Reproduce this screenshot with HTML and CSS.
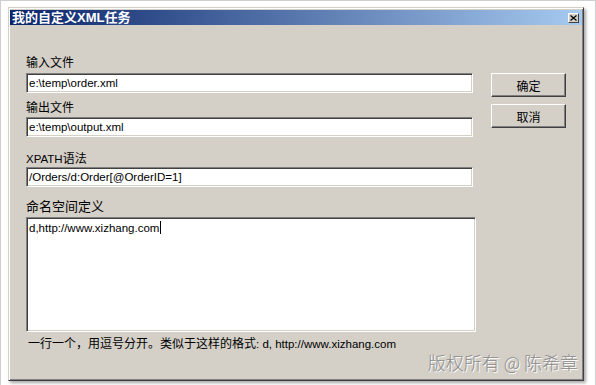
FILE: index.html
```html
<!DOCTYPE html>
<html lang="zh">
<head>
    <meta charset="UTF-8">
    <title>我的自定义XML任务</title>
    <link rel="stylesheet" href="styles.css">
</head>
<body>
    <div class="frame">
        <div class="dialog">
            <div class="titlebar">
                <span class="title">我的自定义XML任务</span>
                <span class="close">
                    <svg width="7" height="6" viewBox="0 0 7 6"><path d="M0.5 0.5 L6.5 5.5 M6.5 0.5 L0.5 5.5" stroke="#000" stroke-width="1.2" fill="none"/></svg>
                </span>
            </div>
            <div class="content">
                <div class="main">
                    <div class="fields">
                        <div class="label label-1">输入文件</div>
                        <div class="input">e:\temp\order.xml</div>
                        <div class="label label-2">输出文件</div>
                        <div class="input">e:\temp\output.xml</div>
                        <div class="label label-3"><span class="latin">XPATH</span>语法</div>
                        <div class="input">/Orders/d:Order[@OrderID=1]</div>
                        <div class="label label-4">命名空间定义</div>
                        <div class="input textarea">d,http://www.xizhang.com<span class="caret"></span></div>
                    </div>
                    <div class="buttons">
                        <button class="btn">确定</button>
                        <button class="btn">取消</button>
                    </div>
                </div>
                <div class="hint">一行一个，用逗号分开。类似于这样的格式<span class="latin">: d, http://www.xizhang.com</span></div>
                <div class="watermark">版权所有 @ 陈希章</div>
            </div>
        </div>
    </div>
</body>
</html>
```

FILE: styles.css
```css
body {
    margin: 0;
    background: #fff;
    font-family: "Liberation Sans", "Noto Sans CJK SC", sans-serif;
    font-size: 12px;
    color: #000;
}
.frame {
    height: 385px;
    box-sizing: border-box;
    border: 1px solid #cfcfcf;
    border-bottom: none;
    padding: 6px 0 0 7px;
}
.dialog {
    width: 576px;
    height: 374px;
    box-sizing: border-box;
    background: #d4d0c8;
    border: 1px solid;
    border-color: #d4d0c8 #404040 #404040 #d4d0c8;
    box-shadow: inset 1px 1px #fff, inset -1px -1px #808080, 2px 2px 3px rgba(0,0,0,0.35);
    padding: 2px 1px 0 1px;
}
.titlebar {
    height: 15px;
    background: linear-gradient(to right, #0a246a, #a6caf0);
    display: flex;
    align-items: center;
    justify-content: space-between;
    padding: 0 2px 0 2px;
}
.title {
    color: #fff;
    font-weight: bold;
    font-size: 13px;
    line-height: 15px;
}
.close {
    width: 11px;
    height: 10px;
    box-sizing: border-box;
    background: #d4d0c8;
    border: 1px solid;
    border-color: #fff #404040 #404040 #fff;
    display: flex;
    align-items: center;
    justify-content: center;
    margin-right: 1px;
}
.close svg {
    display: block;
}
.content {
    padding: 0 0 0 16px;
}
.main {
    display: flex;
    gap: 15px;
}
.fields {
    width: 450px;
}
.label {
    height: 14px;
    line-height: 14px;
    font-size: 12px;
}
.label-1 { margin-top: 31px; margin-bottom: 3px; }
.label-2 { margin-top: 8px; margin-bottom: 2px; }
.label-3 { margin-top: 15px; margin-bottom: 1px; }
.label-4 { margin-top: 12px; margin-bottom: 2px; height: 16px; line-height: 16px; font-size: 13px; }
.input {
    width: 447px;
    height: 20px;
    box-sizing: border-box;
    background: #fff;
    border: 1px solid;
    border-color: #808080 #fff #fff #808080;
    box-shadow: inset 1px 1px #404040, inset -1px -1px #d4d0c8;
    padding: 0 2px;
    line-height: 18px;
    font-size: 11.5px;
    white-space: nowrap;
}
.textarea {
    width: 450px;
    height: 115px;
    padding-top: 1px;
}
.caret {
    display: inline-block;
    width: 1px;
    height: 13px;
    background: #000;
    vertical-align: -2px;
    margin-left: 1px;
}
.buttons {
    display: flex;
    flex-direction: column;
    gap: 7px;
    padding-top: 48px;
}
.btn {
    width: 75px;
    height: 24px;
    box-sizing: border-box;
    background: #d4d0c8;
    border: 1px solid;
    border-color: #fff #404040 #404040 #fff;
    box-shadow: inset -1px -1px #808080, inset 1px 1px #d4d0c8;
    font-family: "Noto Sans CJK SC", sans-serif;
    font-size: 12px;
    color: #000;
    padding: 0;
}
.hint {
    margin-top: 5px;
    height: 14px;
    line-height: 14px;
    padding-left: 2px;
}
.latin {
    font-size: 11.5px;
}
.watermark {
    text-align: right;
    padding-right: 4px;
    margin-top: 1px;
    font-family: "Noto Sans CJK SC", sans-serif;
    font-size: 18px;
    line-height: 20px;
    color: #8c8c8c;
    font-weight: 300;
    text-shadow: 1px 1px #fff;
}
```
